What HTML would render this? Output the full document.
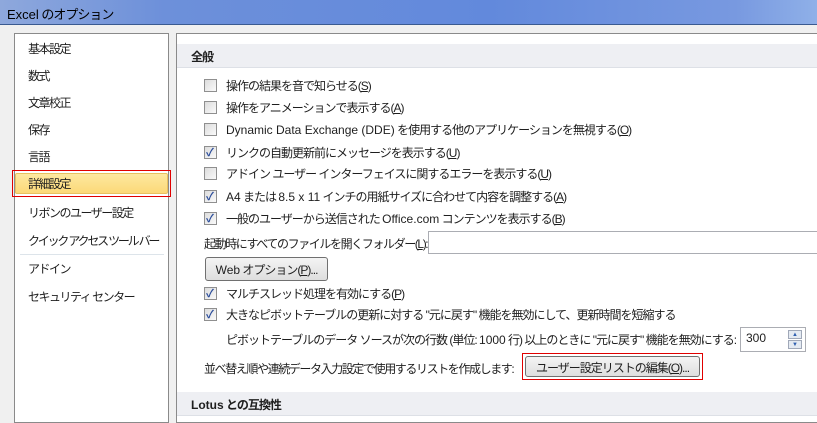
<!DOCTYPE html>
<html><head><meta charset="utf-8"><style>
*{box-sizing:border-box;margin:0;padding:0}
body{width:817px;height:417px;overflow:hidden;background:#f0f0f0;position:relative;font-family:"Liberation Sans","Noto Sans CJK JP",sans-serif;font-size:12px;color:#1e1e1e;letter-spacing:-1px}
.a{position:absolute;white-space:nowrap}
i{font-style:normal;letter-spacing:0}
#title{left:0;top:0;width:817px;height:25px;background:linear-gradient(90deg,#8ea8dc 0%,#6d90da 20%,#6289dc 60%,#7899e0 90%,#8fb0e8 100%);border-bottom:1px solid #3a5a90}
#title span{position:absolute;left:7px;top:4px;font-size:13px;color:#000}
#left{left:14px;top:33px;width:155px;height:390px;background:#fff;border:1px solid #8a8a8a}
#right{left:176px;top:33px;width:650px;height:390px;background:#fff;border:1px solid #8a8a8a}
.hd{left:177px;width:640px;height:24px;background:#eeeff3;border-bottom:1px solid #dde0e6;font-weight:bold;padding:4px 0 0 14px;font-size:12px}
.li{left:28px;font-size:12px;letter-spacing:-1.5px}
.cb{left:204px;width:13px;height:13px;border:1px solid #8f8f8f;background:linear-gradient(135deg,#dcdcdc,#fafafa)}
.cb.c::after{content:"✓";position:absolute;left:1px;top:-3px;font-size:11px;color:#2a4c9a;font-weight:bold}
.t{left:226px}
.btn{border:1px solid #707070;border-radius:3px;background:linear-gradient(#f4f4f4,#dedede);text-align:center;padding-top:3px}
u{text-decoration:underline}
</style></head><body>
<div id="title" class="a"><span><i>Excel</i> のオプション</span></div>
<div id="left" class="a"></div>
<div id="right" class="a"></div>
<div class="a li" style="top:40px">基本設定</div>
<div class="a li" style="top:67px">数式</div>
<div class="a li" style="top:94px">文章校正</div>
<div class="a li" style="top:121px">保存</div>
<div class="a li" style="top:148px">言語</div>
<div class="a" style="left:12px;top:170px;width:159px;height:27px;border:1px solid #e00000;"><div style="position:absolute;left:2px;top:2px;right:2px;bottom:2px;background:linear-gradient(#fde8a0,#fcd978);border:1px solid #e8c060;border-radius:2px"></div></div>
<div class="a li" style="top:175px">詳細設定</div>
<div class="a li" style="top:204px">リボンのユーザー設定</div>
<div class="a li" style="top:232px;letter-spacing:-2.2px">クイック アクセス ツール バー</div>
<div class="a" style="left:20px;top:254px;width:144px;height:1px;background:#dde4ea"></div>
<div class="a li" style="top:260px">アドイン</div>
<div class="a li" style="top:288px;letter-spacing:-1.5px">セキュリティ センター</div>

<div class="a hd" style="top:44px">全般</div>
<div class="a cb" style="top:79px"></div><div class="a t" style="top:77px">操作の結果を音で知らせる(<u>S</u>)</div>
<div class="a cb" style="top:101px"></div><div class="a t" style="top:99px">操作をアニメーションで表示する(<u>A</u>)</div>
<div class="a cb" style="top:123px"></div><div class="a t" style="top:121px"><i>Dynamic Data Exchange (DDE)</i> を使用する他のアプリケーションを無視する(<u>O</u>)</div>
<div class="a cb c" style="top:146px"></div><div class="a t" style="top:144px">リンクの自動更新前にメッセージを表示する(<u>U</u>)</div>
<div class="a cb" style="top:167px"></div><div class="a t" style="top:165px">アドイン ユーザー インターフェイスに関するエラーを表示する(<u>U</u>)</div>
<div class="a cb c" style="top:190px"></div><div class="a t" style="top:188px"><i>A4</i> または <i>8.5 x 11</i> インチの用紙サイズに合わせて内容を調整する(<u>A</u>)</div>
<div class="a cb c" style="top:212px"></div><div class="a t" style="top:210px">一般のユーザーから送信された <i>Office.com</i> コンテンツを表示する(<u>B</u>)</div>
<div class="a" style="left:204px;top:235px;letter-spacing:-1.4px">起動時にすべてのファイルを開くフォルダー(<u>L</u>):</div>
<div class="a" style="left:428px;top:231px;width:400px;height:23px;border:1px solid #abadb3;background:#fff"></div>
<div class="a btn" style="left:205px;top:257px;width:123px;height:24px"><i>Web</i> オプション(<u>P</u>)...</div>
<div class="a cb c" style="top:287px"></div><div class="a t" style="top:285px">マルチスレッド処理を有効にする(<u>P</u>)</div>
<div class="a cb c" style="top:308px"></div><div class="a t" style="top:306px">大きなピボットテーブルの更新に対する "元に戻す" 機能を無効にして、更新時間を短縮する</div>
<div class="a" style="left:226px;top:331px">ピボットテーブルのデータ ソースが次の行数 (単位: <i>1000</i> 行) 以上のときに "元に戻す" 機能を無効にする:</div>
<div class="a" style="left:740px;top:327px;width:66px;height:25px;border:1px solid #abadb3;background:#fff;padding:3px 0 0 5px;letter-spacing:0">300
<div class="a" style="left:47px;top:2px;width:14px;height:9px;border:1px solid #a0a8b8;background:#e4eaf2;font-size:6px;color:#3060b0;text-align:center;line-height:8px">▲</div>
<div class="a" style="left:47px;top:12px;width:14px;height:9px;border:1px solid #a0a8b8;background:#e4eaf2;font-size:6px;color:#3060b0;text-align:center;line-height:8px">▼</div></div>
<div class="a" style="left:204px;top:360px;letter-spacing:-1.4px">並べ替え順や連続データ入力設定で使用するリストを作成します:</div>
<div class="a" style="left:522px;top:353px;width:181px;height:27px;border:1px solid #e00000"></div>
<div class="a btn" style="left:525px;top:356px;width:175px;height:21px;padding-top:2px">ユーザー設定リストの編集(<u>O</u>)...</div>
<div class="a hd" style="top:392px"><i>Lotus</i> との互換性</div>
</body></html>
